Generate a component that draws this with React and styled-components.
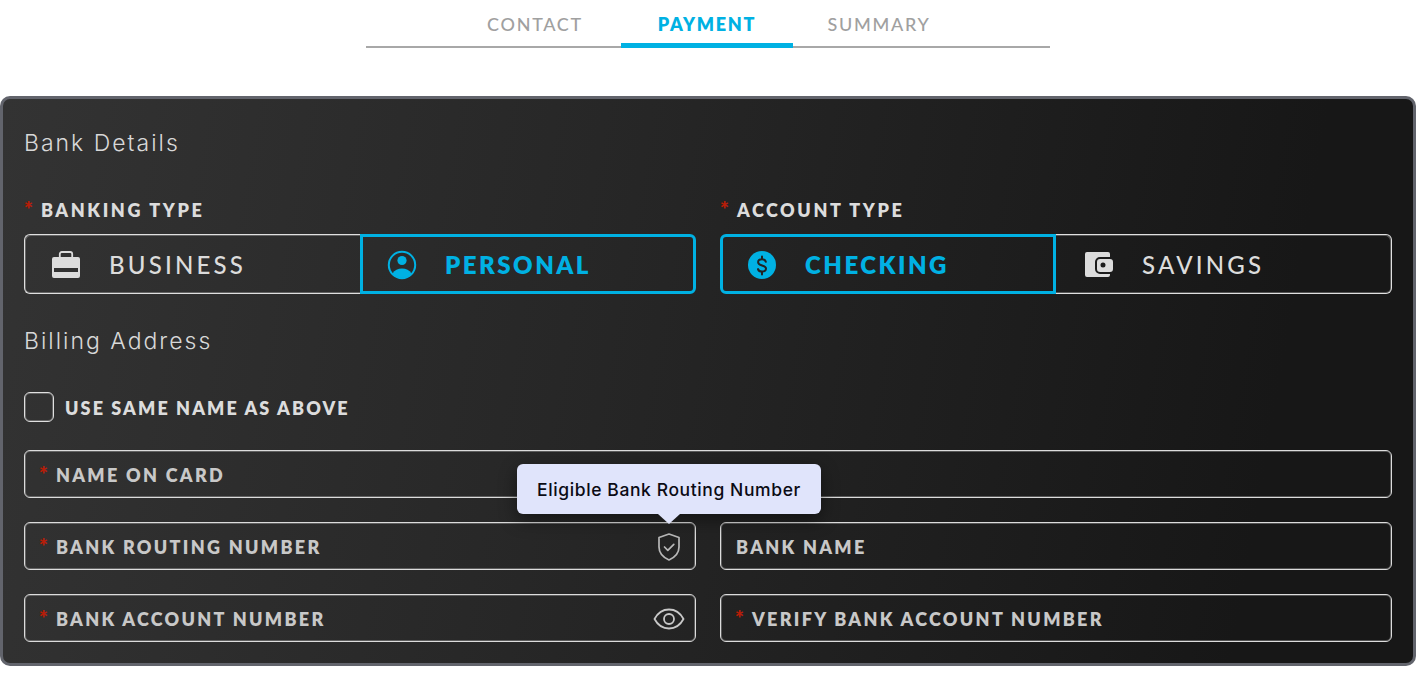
import React from "react";
import styled, { createGlobalStyle } from "styled-components";

const GlobalStyle = createGlobalStyle`
  html, body {
    margin: 0;
    padding: 0;
    background: #fff;
    font-family: "Lato", "Liberation Sans", sans-serif;
  }
  * { box-sizing: border-box; }
`;

const Page = styled.div`
  width: 1416px;
  height: 678px;
  overflow: hidden;
  background: #fff;
`;

const Tabs = styled.nav`
  width: 684px;
  height: 48px;
  margin: 0 auto 48px;
  padding-right: 2px;
  display: flex;
  justify-content: center;
  border-bottom: 2px solid #a8a8a8;
`;

const Tab = styled.div`
  width: 172px;
  height: 48px;
  padding-top: 12px;
  text-align: center;
  font-size: 18px;
  line-height: 24px;
  letter-spacing: 1.7px;
  font-weight: ${(p) => (p.$active ? 800 : 500)};
  color: ${(p) => (p.$active ? "#00b1e3" : "#a0a0a0")};
  border-bottom: ${(p) => (p.$active ? "5px solid #00b1e3" : "none")};
`;

const Panel = styled.section`
  width: 1416px;
  height: 570px;
  padding: 28px 21px 0;
  border: 3px solid #62646c;
  border-radius: 10px;
  background: linear-gradient(100deg, #333333 0%, #272727 40%, #171717 88%);
`;

const SectionTitle = styled.h2`
  margin: 0;
  height: 32px;
  font-family: "Inter", sans-serif;
  font-size: 23px;
  line-height: 32px;
  font-weight: 300;
  letter-spacing: 2px;
  color: #d8d8d8;
`;

const ToggleGrid = styled.div`
  margin-top: 40px;
  display: grid;
  grid-template-columns: 672px 672px;
  column-gap: 24px;
`;

const GroupLabel = styled.div`
  height: 20px;
  margin-bottom: 15px;
  font-size: 18px;
  line-height: 20px;
  font-weight: 800;
  letter-spacing: 2.6px;
  color: #dcdcdc;
`;

const Star = styled.span`
  display: inline-block;
  height: 0;
  color: #b81d08;
  font-size: 21px;
  line-height: 20px;
  font-weight: 800;
  margin-right: 8px;
  letter-spacing: 0;
`;

const FieldStar = styled(Star)`
  margin-left: -1px;
`;

const Toggle = styled.div`
  display: flex;
  height: 60px;
`;

const Segment = styled.div`
  flex: 0 0 336px;
  display: flex;
  align-items: center;
  gap: ${(p) => (p.$active ? "28px" : "29px")};
  padding-left: ${(p) => (p.$active ? "24px" : p.$first ? "27px" : "29px")};
  padding-top: 1px;
  font-size: 24px;
  letter-spacing: ${(p) => (p.$active ? "2.5px" : "3.2px")};
  font-weight: ${(p) => (p.$active ? 800 : 500)};
  color: ${(p) => (p.$active ? "#00b1e3" : "#dcdcdc")};
  border-style: solid;
  border-width: ${(p) => (p.$active ? "3px" : "1px")};
  border-color: ${(p) => (p.$active ? "#00b1e3" : "#e0e0e0")};
  border-radius: ${(p) => (p.$first ? "6px 0 0 6px" : "0 6px 6px 0")};
  ${(p) =>
    p.$active
      ? ""
      : p.$first
        ? "border-right: none; box-shadow: inset 1px 1px 0 rgba(224, 224, 224, 0.3), inset 0 -1px 0 rgba(224, 224, 224, 0.3);"
        : "border-left: none; box-shadow: inset -1px 1px 0 rgba(224, 224, 224, 0.3), inset 0 -1px 0 rgba(224, 224, 224, 0.3);"}
`;

const BillingTitle = styled(SectionTitle)`
  margin-top: 31px;
`;

const CheckRow = styled.label`
  margin-top: 35px;
  display: flex;
  align-items: center;
  gap: 11px;
  height: 30px;
  padding-top: 1px;
  font-size: 18px;
  font-weight: 800;
  letter-spacing: 2.1px;
  color: #dcdcdc;
`;

const CheckBox = styled.span`
  width: 30px;
  height: 30px;
  margin-top: -1px;
  border: 1px solid #e0e0e0;
  box-shadow: inset 0 0 0 1px rgba(224, 224, 224, 0.3);
  border-radius: 6px;
`;

const Fields = styled.div`
  margin-top: 28px;
  display: grid;
  grid-template-columns: 672px 672px;
  gap: 24px;
`;

const Field = styled.div`
  position: relative;
  grid-column: ${(p) => (p.$wide ? "1 / -1" : "auto")};
  height: 48px;
  display: flex;
  align-items: center;
  justify-content: space-between;
  padding: 1px 11px 0 15px;
  border: 1px solid #dcdcdc;
  box-shadow: inset 0 0 0 1px rgba(220, 220, 220, 0.3);
  border-radius: 6px;
  font-size: 18px;
  font-weight: 800;
  letter-spacing: 2.3px;
  color: #c8c8c8;
`;

const ShieldIcon = styled.svg`
  display: block;
  flex: none;
  margin-right: 2px;
`;

const EyeIcon = styled.svg`
  display: block;
  flex: none;
  margin-right: -1px;
`;

const Tooltip = styled.div`
  position: absolute;
  right: -126px;
  bottom: 55px;
  width: 304px;
  height: 50px;
  display: flex;
  align-items: center;
  justify-content: center;
  background: #e0e4fb;
  border-radius: 6px;
  box-shadow: 0 6px 18px rgba(0, 0, 0, 0.45);
  font-family: "Inter", sans-serif;
  font-size: 17.500px;
  font-weight: 500;
  letter-spacing: 0.6px;
  color: #0b0b14;
  z-index: 2;

  &::after {
    content: "";
    position: absolute;
    left: 141px;
    bottom: -10px;
    width: 0;
    height: 0;
    border-left: 11px solid transparent;
    border-right: 11px solid transparent;
    border-top: 10px solid #e0e4fb;
  }
`;

const Briefcase = () => (
  <svg width="28" height="28" viewBox="0 0 28 28" fill="#dcdcdc">
    <rect x="7.800" y="1" width="12.400" height="8" rx="2" fill="none" stroke="#dcdcdc" strokeWidth="1.800" />
    <path
      fillRule="evenodd"
      d="M2 6h24a2 2 0 0 1 2 2v17a2 2 0 0 1-2 2H2a2 2 0 0 1-2-2V8a2 2 0 0 1 2-2ZM2 17v4h24v-4H2Z"
    />
  </svg>
);

const Person = () => (
  <svg width="30" height="30" viewBox="0 0 30 30">
    <circle cx="15" cy="15" r="13.200" fill="none" stroke="#00b1e3" strokeWidth="2" />
    <circle cx="15" cy="10.500" r="4.600" fill="#00b1e3" />
    <path d="M5.500 23.500C7.500 20 11 18.500 15 18.500s7.500 1.500 9.500 5C22 26.500 19 28 15 28s-7-1.500-9.500-4.500Z" fill="#00b1e3" />
  </svg>
);

const Dollar = () => (
  <svg width="30" height="30" viewBox="0 0 30 30">
    <circle cx="15" cy="15" r="14" fill="#00b1e3" />
    <path
      d="M18.800 11.800C18.300 10.200 16.900 9.300 15 9.300c-2.300 0-3.900 1.100-3.900 2.900 0 4.200 7.900 2.300 7.900 6.400 0 1.900-1.700 3-4 3-2 0-3.500-.9-4-2.500M15 6.500v2.800M15 21.600v2.800"
      fill="none"
      stroke="#222"
      strokeWidth="2"
      strokeLinecap="round"
    />
  </svg>
);

const Wallet = () => (
  <svg width="28" height="28" viewBox="0 0 28 28" fill="#dcdcdc">
    <path
      fillRule="evenodd"
      d="M2 1h21a2 2 0 0 1 2 2v3H15a5 5 0 0 0-5 5v7a5 5 0 0 0 5 5h10v1a2 2 0 0 1-2 2H2a2 2 0 0 1-2-2V3a2 2 0 0 1 2-2Z"
    />
    <path
      fillRule="evenodd"
      d="M15 8h10a3 3 0 0 1 3 3v7a3 3 0 0 1-3 3H15a3 3 0 0 1-3-3v-7a3 3 0 0 1 3-3Zm3 3.500a2.500 2.500 0 1 0 0 5 2.500 2.500 0 0 0 0-5Z"
    />
  </svg>
);

const Shield = () => (
  <ShieldIcon width="26" height="30" viewBox="0 0 26 30" fill="none" stroke="#b8b8b8" strokeWidth="1.700" strokeLinejoin="round" strokeLinecap="round">
    <path d="M13 2 3 5.500V15c0 6 4.500 10.500 10 13 5.500-2.500 10-7 10-13V5.500L13 2Z" />
    <path d="m8.500 15 3.300 3.300 6-6" />
  </ShieldIcon>
);

const Eye = () => (
  <EyeIcon width="32" height="26" viewBox="0 0 32 26" fill="none" stroke="#c8c8c8" strokeWidth="1.800">
    <path d="M1.500 13C5 6.500 10 3.500 16 3.500S27 6.500 30.500 13C27 19.500 22 22.500 16 22.500S5 19.500 1.500 13Z" strokeLinejoin="round" />
    <circle cx="16" cy="13" r="5" />
  </EyeIcon>
);

const types = [
  {
    label: "BANKING TYPE",
    options: [
      { name: "BUSINESS", icon: <Briefcase /> },
      { name: "PERSONAL", icon: <Person />, active: true },
    ],
  },
  {
    label: "ACCOUNT TYPE",
    options: [
      { name: "CHECKING", icon: <Dollar />, active: true },
      { name: "SAVINGS", icon: <Wallet /> },
    ],
  },
];

export default function App() {
  return (
    <Page>
      <GlobalStyle />
      <Tabs>
        <Tab>CONTACT</Tab>
        <Tab $active>PAYMENT</Tab>
        <Tab>SUMMARY</Tab>
      </Tabs>
      <Panel>
        <SectionTitle>Bank Details</SectionTitle>
        <ToggleGrid>
          {types.map((t) => (
            <div key={t.label}>
              <GroupLabel>
                <Star>*</Star>
                {t.label}
              </GroupLabel>
              <Toggle>
                {t.options.map((o, i) => (
                  <Segment key={o.name} $active={o.active} $first={i === 0}>
                    {o.icon}
                    {o.name}
                  </Segment>
                ))}
              </Toggle>
            </div>
          ))}
        </ToggleGrid>
        <BillingTitle>Billing Address</BillingTitle>
        <CheckRow>
          <CheckBox />
          USE SAME NAME AS ABOVE
        </CheckRow>
        <Fields>
          <Field $wide>
            <span>
              <FieldStar>*</FieldStar>NAME ON CARD
            </span>
          </Field>
          <Field>
            <span>
              <FieldStar>*</FieldStar>BANK ROUTING NUMBER
            </span>
            <Shield />
            <Tooltip>Eligible Bank Routing Number</Tooltip>
          </Field>
          <Field>
            <span>BANK NAME</span>
          </Field>
          <Field>
            <span>
              <FieldStar>*</FieldStar>BANK ACCOUNT NUMBER
            </span>
            <Eye />
          </Field>
          <Field>
            <span>
              <FieldStar>*</FieldStar>VERIFY BANK ACCOUNT NUMBER
            </span>
          </Field>
        </Fields>
      </Panel>
    </Page>
  );
}
